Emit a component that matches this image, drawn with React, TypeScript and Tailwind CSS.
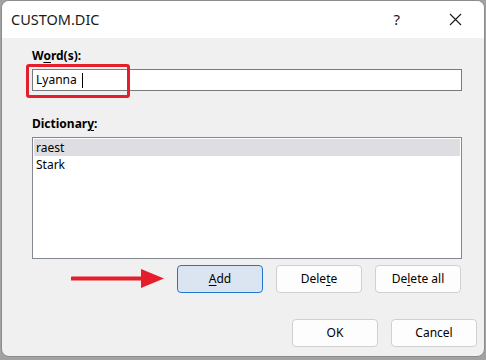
import React from "react";

const font = { fontFamily: '"Noto Sans", "Open Sans", sans-serif' };

function Btn({
  children,
  primary,
}: {
  children: React.ReactNode;
  primary?: boolean;
}) {
  return (
    <div
      className={
        primary
          ? "flex h-[28px] w-[86px] items-center justify-center rounded-[4px] border border-[#1f76d0] bg-[#dae5f1] text-[12px] text-black"
          : "flex h-[28px] w-[86px] items-center justify-center rounded-[4px] border border-[#d0d0d0] bg-[#fdfdfd] text-[12px] text-black"
      }
    >
      {children}
    </div>
  );
}

function U({ children }: { children: React.ReactNode }) {
  return <span className="underline decoration-1 underline-offset-[1.5px]">{children}</span>;
}

export default function App() {
  return (
    <div className="h-[360px] w-[486px] bg-[#a2a2a2] pl-px" style={font}>
      <div className="relative flex h-[357px] w-[484px] flex-col overflow-hidden rounded-[8px] border border-[#8c8c8c] bg-[#f0f0f0]">
        {/* title bar */}
        <div className="flex h-[37px] items-center bg-white pl-[9px]">
          <span className="text-[14.5px] text-[#1a1a1a]">CUSTOM.DIC</span>
          <span className="ml-auto mr-[49px] text-[15px] text-[#1a1a1a]">?</span>
          <svg width="13" height="13" viewBox="0 0 13 13" className="mr-[22px]">
            <path d="M1 1 L12 12 M12 1 L1 12" stroke="#1a1a1a" strokeWidth="1.1" />
          </svg>
        </div>

        {/* body */}
        <div className="flex flex-1 flex-col pl-[30px] pr-[7px] pt-[10px] text-[12px] text-black">
          <div className="w-[430px]">
            <div className="h-[16px] font-bold leading-[16px]">
              W<U>o</U>rd(s):
            </div>
            <div className="relative mt-[5px] flex h-[22px] items-center border border-[#7a7a7a] bg-white pl-[3px]">
              <span>Lyanna</span>
              <span className="ml-[5px] h-[15px] w-px bg-black" />
              <div className="absolute left-[-7px] top-[-6px] h-[34px] w-[104px] rounded-[3px] border-[3px] border-[#e41f2b]" />
            </div>

            <div className="mt-[25px] h-[16px] font-bold leading-[16px]">
              Dictionar<U>y</U>:
            </div>
            <div className="mt-[5px] flex h-[122px] flex-col border border-[#828790] bg-white p-px">
              <div className="flex h-[17px] items-center bg-[#dedee2] pl-[2px]">raest</div>
              <div className="flex h-[17px] items-center pl-[2px]">Stark</div>
            </div>

            <div className="relative mt-[6px] flex justify-end gap-[13px] pr-px">
              <svg
                width="95"
                height="22"
                viewBox="0 0 95 22"
                className="absolute left-[39px] top-[3px]"
              >
                <path d="M1 10.5 H72" stroke="#e41f2b" strokeWidth="4" strokeLinecap="round" />
                <polygon points="70,1 93,10.5 70,20" fill="#e41f2b" />
              </svg>
              <Btn primary>
                <U>A</U>dd
              </Btn>
              <Btn>
                Dele<U>t</U>e
              </Btn>
              <Btn>
                De<U>l</U>ete all
              </Btn>
            </div>
          </div>

          <div className="mt-[26px] flex justify-end gap-[13px]">
            <Btn>OK</Btn>
            <Btn>Cancel</Btn>
          </div>
        </div>
      </div>
    </div>
  );
}
